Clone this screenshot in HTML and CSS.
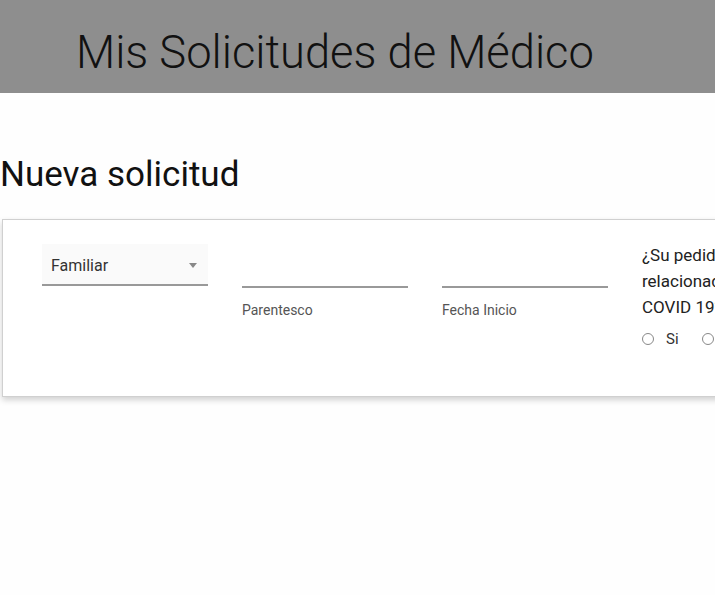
FILE: index.html
```html
<!DOCTYPE html>
<html lang="es">
<head>
<meta charset="utf-8">
<link rel="stylesheet" href="styles.css">
</head>
<body>
<header class="topbar">
  <h1 class="title">Mis Solicitudes de Médico</h1>
</header>
<main class="content">
  <h2 class="section-title">Nueva solicitud</h2>
  <div class="card-clip">
    <section class="card">
      <div class="field">
        <div class="select">
          <span class="select-value">Familiar</span>
          <span class="select-arrow"></span>
        </div>
      </div>
      <div class="field">
        <div class="input"></div>
        <div class="label">Parentesco</div>
      </div>
      <div class="field">
        <div class="input"></div>
        <div class="label">Fecha Inicio</div>
      </div>
      <div class="field question">
        <div class="q-text">¿Su pedido está relacionado con COVID 19?</div>
        <div class="radios">
          <label class="radio"><span class="circle"></span><span>Si</span></label>
          <label class="radio"><span class="circle"></span><span>No</span></label>
        </div>
      </div>
    </section>
  </div>
</main>
</body>
</html>
```

FILE: styles.css
```css
html, body {
  margin: 0;
  padding: 0;
  background: #fefefe;
  font-family: Roboto, "Liberation Sans", sans-serif;
  color: #222;
  overflow: hidden;
}

.topbar {
  height: 93px;
  background: #8e8e8e;
  display: flex;
  align-items: center;
  padding-left: 76px;
  box-sizing: border-box;
}

.title {
  margin: 0;
  font-weight: 300;
  font-size: 45.3px;
  color: #111;
  line-height: 1;
  padding-top: 12px;
}

.content {
  padding-top: 62px;
}

.section-title {
  margin: 0;
  font-weight: 400;
  font-size: 35px;
  line-height: 40px;
  color: #111;
}

.card-clip {
  padding: 24px 0 40px 2px;
  overflow: hidden;
}

.card {
  width: 900px;
  height: 178px;
  background: #fff;
  border: 1px solid #d0d0d0;
  border-right: none;
  box-shadow: 0 3px 6px rgba(0, 0, 0, 0.18);
  display: flex;
  gap: 34px;
  padding: 24px 0 0 39px;
  box-sizing: border-box;
}

.field {
  width: 166px;
  flex: none;
}

.select {
  height: 42px;
  background: #fafafa;
  border-bottom: 2px solid #999;
  display: flex;
  align-items: center;
  justify-content: space-between;
  padding: 2px 9px 0 9px;
  box-sizing: border-box;
}

.select-value {
  font-size: 16px;
  color: #333;
}

.select-arrow {
  width: 0;
  height: 0;
  border-left: 4px solid transparent;
  border-right: 4px solid transparent;
  border-top: 5px solid #888;
  margin-right: 2px;
}

.input {
  height: 42px;
  border-bottom: 2px solid #999;
}

.label {
  margin-top: 14px;
  font-size: 14px;
  color: #555;
}

.question {
  margin-top: -2px;
}

.q-text {
  font-size: 17px;
  line-height: 26px;
  color: #222;
}

.radios {
  display: flex;
  gap: 23px;
  margin-top: 10px;
}

.radio {
  display: flex;
  align-items: center;
  gap: 12px;
  font-size: 15px;
  color: #333;
}

.circle {
  width: 10px;
  height: 10px;
  border: 1px solid #888;
  border-radius: 50%;
  display: inline-block;
}
```
